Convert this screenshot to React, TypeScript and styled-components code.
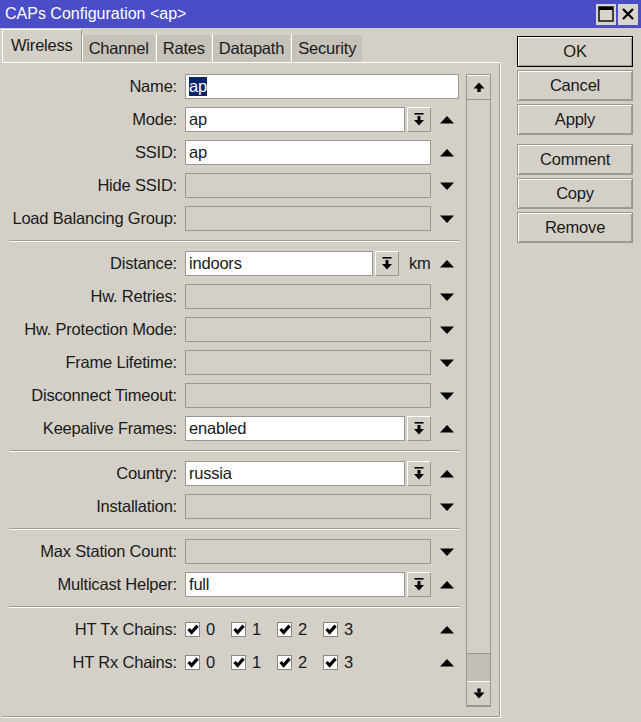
import React from 'react';
import styled, { createGlobalStyle } from 'styled-components';

const GlobalStyle = createGlobalStyle`
  html, body {
    margin: 0;
    padding: 0;
    background: #d4d0c8;
  }
  body {
    font-family: "Liberation Sans", Arial, sans-serif;
    font-size: 16.5px;
    letter-spacing: -0.2px;
    color: #1a1a1a;
  }
`;

const Window = styled.div`
  width: 641px;
  height: 722px;
  background: #d4d0c8;
  display: flex;
  flex-direction: column;
  overflow: hidden;
`;

const TitleBar = styled.div`
  height: 28px;
  background: #4b4dc6;
  display: flex;
  align-items: center;
  justify-content: space-between;
  padding: 0 3px 0 5px;
  flex-shrink: 0;
`;

const Title = styled.span`
  color: #fff;
  font-size: 16px;
  letter-spacing: 0;
`;

const TitleButtons = styled.div`
  display: flex;
  gap: 2px;
`;

const TitleButton = styled.div`
  width: 20px;
  height: 21px;
  background: #d8d4cc;
  display: flex;
  align-items: center;
  justify-content: center;
`;

const Body = styled.div`
  display: flex;
  flex: 1;
  padding: 1px 0 4px 2px;
  gap: 16px;
`;

const Left = styled.div`
  display: flex;
  flex-direction: column;
  width: 499px;
`;

const Tabs = styled.div`
  display: flex;
  align-items: flex-end;
  height: 33px;
`;

const Tab = styled.div<{ $active?: boolean }>`
  height: ${p => (p.$active ? 33 : 28)}px;
  box-sizing: border-box;
  padding: ${p => (p.$active ? '6px 8px 0' : '4px 6px 0')};
  background: ${p => (p.$active ? '#d4d0c8' : '#c6c2ba')};
  border-left: 1px solid #fff;
  border-top: 1px solid ${p => (p.$active ? '#fff' : '#d4d0c8')};
  border-right: 1px solid ${p => (p.$active ? '#a09c94' : '#d4d0c8')};
  white-space: nowrap;
`;

const Panel = styled.div`
  flex: 1;
  display: flex;
  border-top: 1px solid #fff;
  border-right: 1px solid #fff;
  border-bottom: 1px solid #fff;
  box-shadow: inset -1px -1px 0 #a09c94;
  padding: 11px 9px 10px 8px;
  gap: 7px;
`;

const Form = styled.div`
  flex: 1;
  display: flex;
  flex-direction: column;
  gap: 8px;
`;

const Row = styled.div`
  display: grid;
  grid-template-columns: 167px 246px 20px;
  column-gap: 8px;
  height: 25px;
  align-items: center;
`;

const Label = styled.span`
  text-align: right;
  white-space: nowrap;
`;

const FieldGroup = styled.div<{ $wide?: boolean }>`
  display: flex;
  align-items: center;
  gap: 2px;
  height: 25px;
  grid-column: ${p => (p.$wide ? '2 / 4' : 'auto')};
`;

const Input = styled.div<{ $disabled?: boolean }>`
  flex: 1;
  height: 25px;
  box-sizing: border-box;
  border: 1px solid #9c9890;
  background: ${p => (p.$disabled ? '#d4d0c8' : '#fff')};
  padding: 0 3px;
  display: flex;
  align-items: center;
  white-space: nowrap;
`;

const Selected = styled.span`
  background: #0a246a;
  color: #fff;
`;

const DropButton = styled.div`
  width: 24px;
  height: 25px;
  box-sizing: border-box;
  border: 1px solid #9c9890;
  border-top-color: #fff;
  border-left-color: #fff;
  background: #d4d0c8;
  display: flex;
  align-items: center;
  justify-content: center;
`;

const Unit = styled.span`
  width: 22px;
  margin-left: 8px;
`;

const ArrowCell = styled.div`
  display: flex;
  justify-content: center;
  padding-right: 4px;
`;

const Separator = styled.div`
  height: 4px;
  margin-left: -1px;
  display: flex;
  flex-direction: column;
  justify-content: center;

  &::before {
    content: '';
    height: 1px;
    background: #a09c94;
  }
  &::after {
    content: '';
    height: 1px;
    background: #fff;
  }
`;

const Checks = styled.div`
  display: flex;
  align-items: center;
  grid-column: 2 / 3;
`;

const CheckItem = styled.div`
  display: flex;
  align-items: center;
  width: 46px;
  gap: 6px;
`;

const Box = styled.div`
  width: 15px;
  height: 15px;
  box-sizing: border-box;
  border: 1px solid #8c8880;
  background: #fff;
  display: flex;
  align-items: center;
  justify-content: center;
`;

const Scrollbar = styled.div`
  width: 25px;
  display: flex;
  flex-direction: column;
  border: 1px solid #9c9890;
  box-sizing: border-box;
`;

const ScrollButton = styled.div`
  height: 23px;
  background: #d4d0c8;
  border-top: 1px solid #fff;
  border-bottom: 1px solid #9c9890;
  display: flex;
  align-items: center;
  justify-content: center;
`;

const Track = styled.div`
  flex: 1;
  display: flex;
  flex-direction: column;
  justify-content: flex-end;
`;

const Thumb = styled.div`
  height: 27px;
  background: #c2beb6;
  border-top: 1px solid #9c9890;
`;

const ButtonColumn = styled.div`
  display: flex;
  flex-direction: column;
  gap: 3px;
  width: 116px;
  padding-top: 7px;
`;

const Button = styled.div<{ $default?: boolean; $spaced?: boolean }>`
  height: 31px;
  box-sizing: border-box;
  border: 1px solid ${p => (p.$default ? '#000' : '#9c9890')};
  box-shadow: inset 1px 1px 0 #fff, inset -1px -1px 0 #a09c94;
  display: flex;
  align-items: center;
  justify-content: center;
  margin-top: ${p => (p.$spaced ? 6 : 0)}px;
`;

const Up = () => (
  <svg width="14" height="8" viewBox="0 0 14 8">
    <polygon points="0,7.5 14,7.5 7,0" fill="#000" />
  </svg>
);

const Down = () => (
  <svg width="14" height="8" viewBox="0 0 14 8">
    <polygon points="0,0.5 14,0.5 7,8" fill="#000" />
  </svg>
);

const DropIcon = () => (
  <svg width="12" height="14" viewBox="0 0 12 14">
    <rect x="1.5" y="0" width="9" height="1.6" fill="#000" />
    <rect x="4.5" y="3" width="3" height="4" fill="#000" />
    <polygon points="1,7 11,7 6,12.5" fill="#000" />
  </svg>
);

const ScrollUpIcon = () => (
  <svg width="12" height="11" viewBox="0 0 12 11">
    <polygon points="0.5,6.5 11.5,6.5 6,0.5" fill="#000" />
    <rect x="4.3" y="6" width="3.4" height="4" fill="#000" />
  </svg>
);

const ScrollDownIcon = () => (
  <svg width="12" height="11" viewBox="0 0 12 11">
    <rect x="4.3" y="0.5" width="3.4" height="4" fill="#000" />
    <polygon points="0.5,4.5 11.5,4.5 6,10.5" fill="#000" />
  </svg>
);

const CheckMark = () => (
  <svg width="12" height="11" viewBox="0 0 12 11">
    <path d="M1.5 5 L4.6 8.4 L10.6 1.6" stroke="#000" strokeWidth="3.2" fill="none" />
  </svg>
);

type Field = {
  label: string;
  value?: string;
  drop?: boolean;
  unit?: string;
  up?: boolean;
};

const sections: Field[][] = [
  [
    { label: 'Mode:', value: 'ap', drop: true, up: true },
    { label: 'SSID:', value: 'ap', up: true },
    { label: 'Hide SSID:' },
    { label: 'Load Balancing Group:' },
  ],
  [
    { label: 'Distance:', value: 'indoors', drop: true, unit: 'km', up: true },
    { label: 'Hw. Retries:' },
    { label: 'Hw. Protection Mode:' },
    { label: 'Frame Lifetime:' },
    { label: 'Disconnect Timeout:' },
    { label: 'Keepalive Frames:', value: 'enabled', drop: true, up: true },
  ],
  [
    { label: 'Country:', value: 'russia', drop: true, up: true },
    { label: 'Installation:' },
  ],
  [
    { label: 'Max Station Count:' },
    { label: 'Multicast Helper:', value: 'full', drop: true, up: true },
  ],
];

const FieldRow = ({ f }: { f: Field }) => (
  <Row>
    <Label>{f.label}</Label>
    <FieldGroup>
      <Input $disabled={f.value === undefined}>{f.value}</Input>
      {f.drop && (
        <DropButton>
          <DropIcon />
        </DropButton>
      )}
      {f.unit && <Unit>{f.unit}</Unit>}
    </FieldGroup>
    <ArrowCell>{f.up ? <Up /> : <Down />}</ArrowCell>
  </Row>
);

const ChainRow = ({ label }: { label: string }) => (
  <Row>
    <Label>{label}</Label>
    <Checks>
      {['0', '1', '2', '3'].map(n => (
        <CheckItem key={n}>
          <Box>
            <CheckMark />
          </Box>
          {n}
        </CheckItem>
      ))}
    </Checks>
    <ArrowCell>
      <Up />
    </ArrowCell>
  </Row>
);

export default function App() {
  return (
    <Window>
      <GlobalStyle />
      <TitleBar>
        <Title>CAPs Configuration &lt;ap&gt;</Title>
        <TitleButtons>
          <TitleButton>
            <svg width="16" height="16" viewBox="0 0 16 16">
              <rect x="1" y="1" width="14" height="14" fill="none" stroke="#000" strokeWidth="1.4" />
              <rect x="1" y="1" width="14" height="3" fill="#000" />
            </svg>
          </TitleButton>
          <TitleButton>
            <svg width="14" height="14" viewBox="0 0 14 14">
              <path d="M2 2 L12 12 M12 2 L2 12" stroke="#000" strokeWidth="2.2" />
            </svg>
          </TitleButton>
        </TitleButtons>
      </TitleBar>
      <Body>
        <Left>
          <Tabs>
            <Tab $active>Wireless</Tab>
            <Tab>Channel</Tab>
            <Tab>Rates</Tab>
            <Tab>Datapath</Tab>
            <Tab>Security</Tab>
          </Tabs>
          <Panel>
            <Form>
              <Row>
                <Label>Name:</Label>
                <FieldGroup $wide>
                  <Input>
                    <Selected>ap</Selected>
                  </Input>
                </FieldGroup>
              </Row>
              {sections.map((sec, i) => (
                <React.Fragment key={i}>
                  {i > 0 && <Separator />}
                  {sec.map(f => (
                    <FieldRow key={f.label} f={f} />
                  ))}
                </React.Fragment>
              ))}
              <Separator />
              <ChainRow label="HT Tx Chains:" />
              <ChainRow label="HT Rx Chains:" />
            </Form>
            <Scrollbar>
              <ScrollButton>
                <ScrollUpIcon />
              </ScrollButton>
              <Track>
                <Thumb />
              </Track>
              <ScrollButton>
                <ScrollDownIcon />
              </ScrollButton>
            </Scrollbar>
          </Panel>
        </Left>
        <ButtonColumn>
          <Button $default>OK</Button>
          <Button>Cancel</Button>
          <Button>Apply</Button>
          <Button $spaced>Comment</Button>
          <Button>Copy</Button>
          <Button>Remove</Button>
        </ButtonColumn>
      </Body>
    </Window>
  );
}
